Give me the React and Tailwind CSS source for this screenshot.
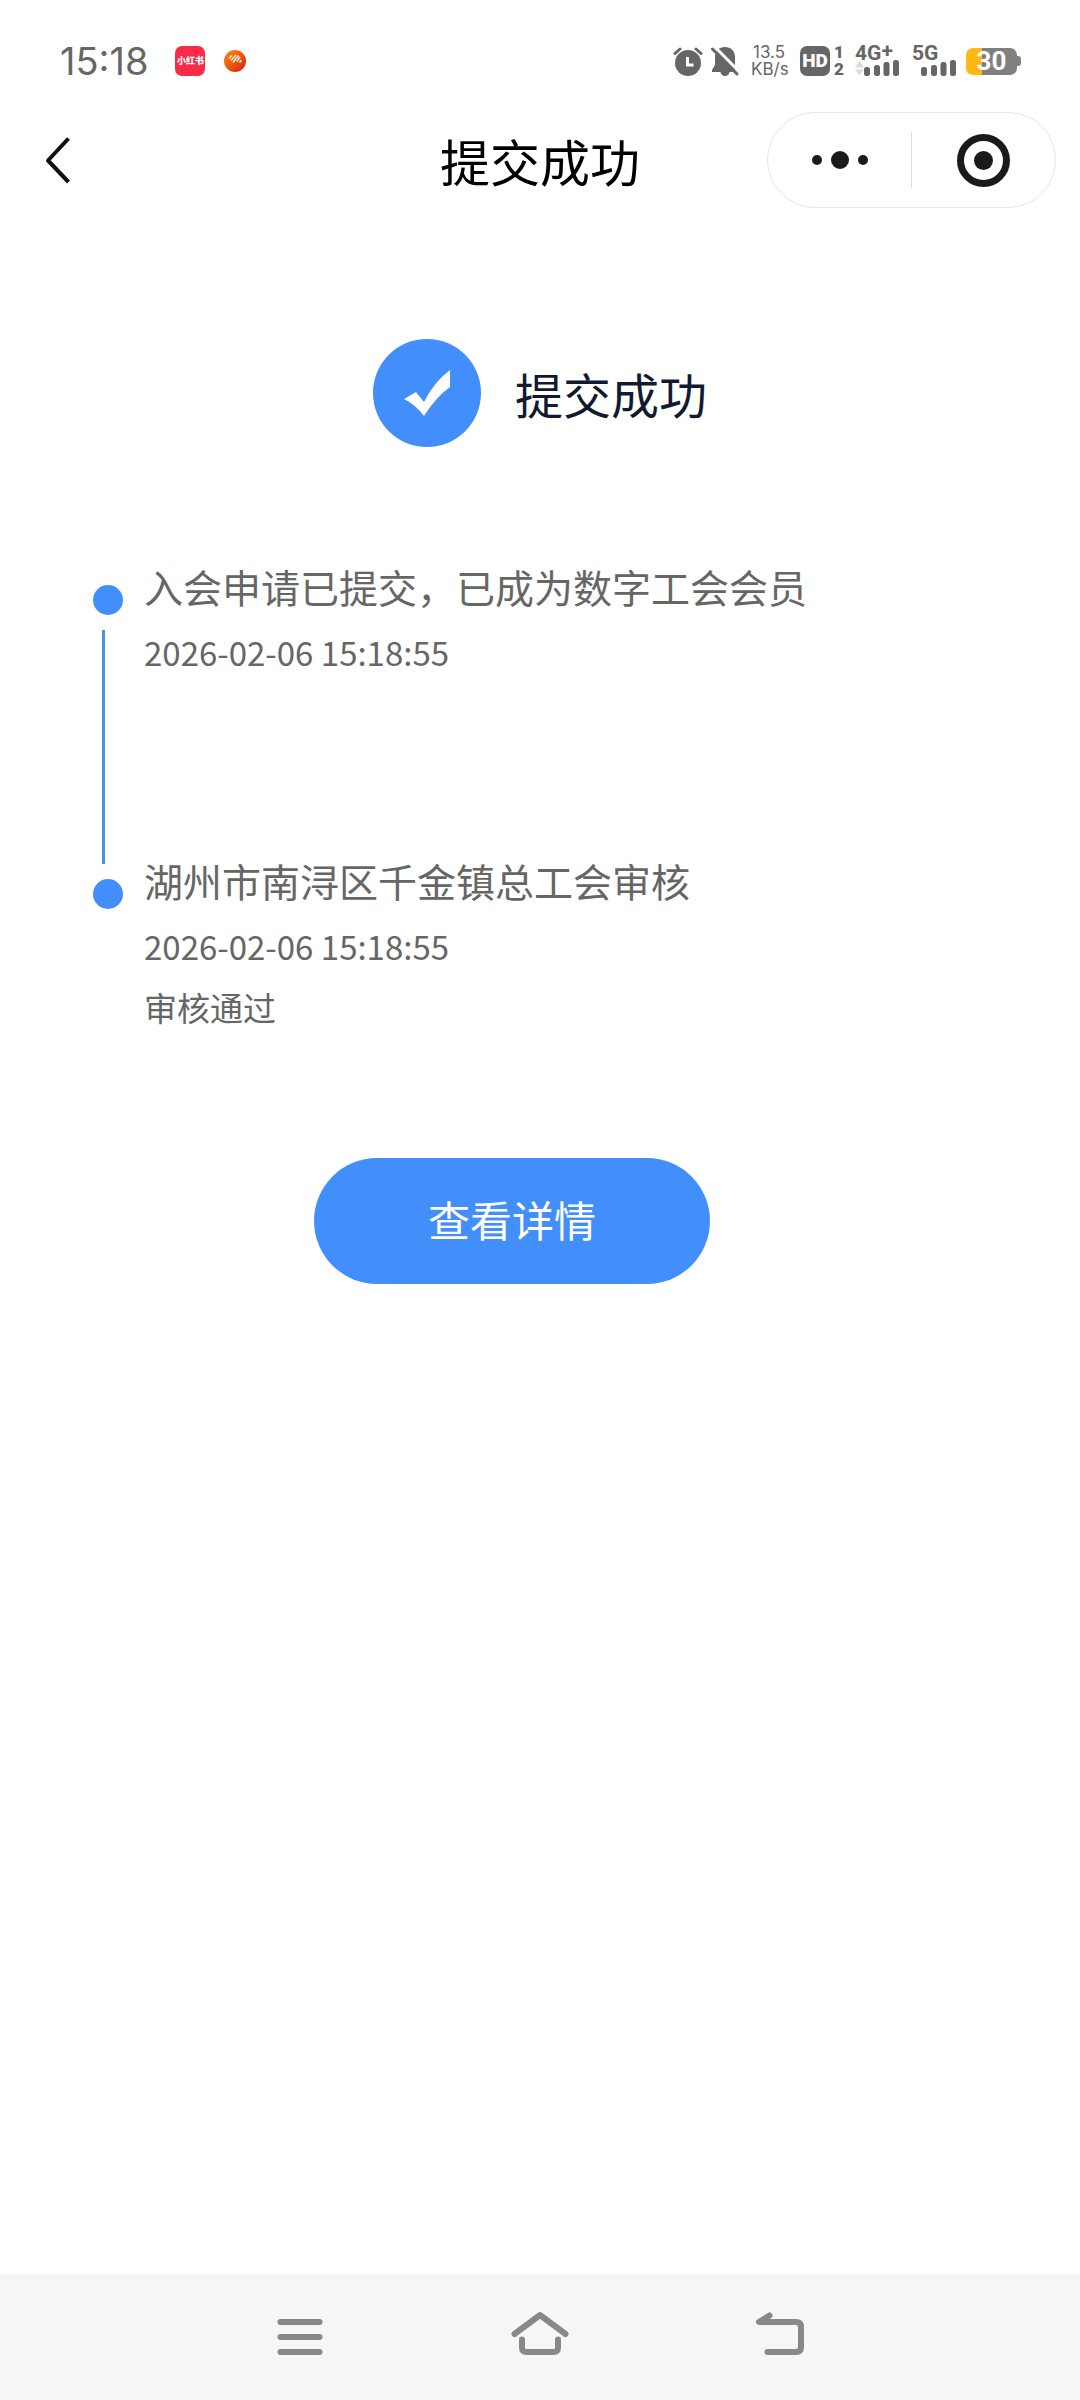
const steps = [
  {
    id: 1,
    title: "入会申请已提交，已成为数字工会会员",
    time: "2026-02-06 15:18:55",
  },
  {
    id: 2,
    title: "湖州市南浔区千金镇总工会审核",
    time: "2026-02-06 15:18:55",
    result: "审核通过",
  },
]

const SignalBars = ({ idle }) => (
  <svg className="shrink-0" width="46" height="16" viewBox="0 0 46 16" fill="#666666">
    {idle && (
      <g fill="#d9d9d9">
        <path d="M0 7.500L4.500 1L9 7.500z" />
        <path d="M0 9.500h9L4.500 15z" />
      </g>
    )}
    <rect x="9" y="7" width="6" height="9" rx="2.500" />
    <rect x="19" y="5" width="6" height="11" rx="2.500" />
    <rect x="28.500" y="2" width="6" height="14" rx="2.500" />
    <rect x="38" y="0" width="6" height="16" rx="2.500" />
  </svg>
)

const StatusBar = () => (
  <div className="flex h-[104px] items-center pt-[18px] pl-[60px] pr-[59px] font-['Inter',sans-serif] text-[#666666]">
    <span className="text-[38px] leading-[40px]">15:18</span>
    <span className="ml-[27px] flex size-[30px] items-center justify-center rounded-[7px] bg-[#fb2a47] font-['Noto_Sans_CJK_SC',sans-serif] text-[9px] leading-[10px] font-black whitespace-nowrap text-white">
      小红书
    </span>
    <svg className="ml-[19px]" width="22" height="22" viewBox="0 0 22 22">
      <defs>
        <linearGradient id="ball" x1="0" y1="0" x2="1" y2="1">
          <stop offset="0" stopColor="#ff8a1c" />
          <stop offset="0.500" stopColor="#f2560f" />
          <stop offset="1" stopColor="#c81e0c" />
        </linearGradient>
      </defs>
      <circle cx="11" cy="11" r="11" fill="url(#ball)" />
      <path d="M5 8.500L8 5.500M7 10.500L12 5M9 12.500L14.500 5.500M13 11.500L16 7M15.500 12.500L17.500 10" stroke="#fff3d8" strokeWidth="1.500" fill="none" />
    </svg>

    <div className="ml-auto flex items-center">
      <svg width="30" height="30" viewBox="0 0 30 30">
        <circle cx="15" cy="17" r="13" fill="#666666" />
        <path d="M2 7.500L7 3M28 7.500L23 3" stroke="#666666" strokeWidth="3" strokeLinecap="round" />
        <path d="M14.500 11v8h6" fill="none" stroke="#fff" strokeWidth="3" />
      </svg>
      <svg className="ml-2" width="28" height="30" viewBox="0 0 28 30">
        <path
          d="M14 1c-6 0-10 4-10 10v8l-3 5v2h8.500a4.500 4 0 0 0 9 0H24V11c0-6-4-10-10-10z"
          fill="#666666"
        />
        <path d="M3 0L29 26.500" stroke="#fff" strokeWidth="3" />
        <path d="M1.500 3L26 28" stroke="#666666" strokeWidth="3" strokeLinecap="round" />
      </svg>
      <div className="ml-3 w-[36px] text-center text-[17px] leading-[17px]">
        <div>13.5</div>
        <div>KB/s</div>
      </div>
      <span className="ml-[13px] flex size-[30px] items-center justify-center rounded-[7px] bg-[#666666] font-['Roboto',sans-serif] text-[19px] font-black text-white">
        HD
      </span>
      <div className="ml-1 w-[10px] text-center font-['Roboto',sans-serif] text-[17px] leading-[17px] font-black">
        <div>1</div>
        <div>2</div>
      </div>
      <div className="ml-[11px] flex h-[30px] flex-col">
        <span className="flex h-[14px] items-center font-['Roboto',sans-serif] text-[21px] leading-[14px] font-bold">
          4G<span className="pb-1">+</span>
        </span>
        <SignalBars idle />
      </div>
      <div className="ml-[11px] flex h-[30px] flex-col">
        <span className="h-[14px] font-['Roboto',sans-serif] text-[21px] leading-[14px] font-bold">5G</span>
        <SignalBars />
      </div>
      <div className="ml-2 flex items-center">
        <span className="flex h-[27px] w-[51px] items-center justify-center rounded-[7px] bg-linear-to-r from-[#fdb813] from-32% to-[#808080] to-32% font-['Roboto',sans-serif] text-[26px] leading-[27px] font-bold text-white">
          30
        </span>
        <span className="h-[10px] w-[4px] rounded-r-[3px] bg-[#808080]" />
      </div>
    </div>
  </div>
)

const Header = () => (
  <header className="grid h-[112px] grid-cols-[1fr_auto_1fr] items-center px-6">
    <button type="button" aria-label="返回" className="justify-self-start pl-5">
      <svg width="28" height="48" viewBox="0 0 28 48" fill="none" stroke="#111" strokeWidth="4" strokeLinejoin="round">
        <path d="M24.500 2.500L4 24.500L24.500 46" />
      </svg>
    </button>
    <h1 className="text-[50px] leading-[60px] text-black">提交成功</h1>
    <div className="flex h-[96px] w-[289px] items-center justify-self-end rounded-full border border-[#e6e6e6]">
      <button type="button" aria-label="更多" className="flex flex-1 items-center justify-center gap-[9px]">
        <span className="size-[10px] rounded-full bg-[#1a1a1a]" />
        <span className="size-[18px] rounded-full bg-[#1a1a1a]" />
        <span className="size-[10px] rounded-full bg-[#1a1a1a]" />
      </button>
      <span className="h-[57px] w-px bg-[#e0e0e0]" />
      <button type="button" aria-label="关闭" className="flex flex-1 justify-center">
        <span className="flex size-[53px] items-center justify-center rounded-full border-[7px] border-[#1a1a1a]">
          <span className="size-[19px] rounded-full bg-[#1a1a1a]" />
        </span>
      </button>
    </div>
  </header>
)

const Timeline = () => (
  <ol className="mt-[123px] pl-[93px] text-[#666666]">
    {steps.map((step, index) => (
      <li key={step.id} className={index < steps.length - 1 ? "flex min-h-[294px] gap-[21px]" : "flex gap-[21px]"}>
        <div className="flex w-[30px] shrink-0 flex-col gap-[15px] pt-[15px]">
          <span className="size-[30px] rounded-full bg-[#428ffc]" />
          {index < steps.length - 1 && <span className="ml-[9px] w-[3px] flex-1 bg-[#4a90e2]" />}
        </div>
        <div>
          <h3 className="text-[39px] leading-[32px]">{step.title}</h3>
          <p className="mt-[30px] text-[33px] leading-[40px]">{step.time}</p>
          {step.result && <p className="mt-[21px] text-[33px] leading-[40px]">{step.result}</p>}
        </div>
      </li>
    ))}
  </ol>
)

const NavBar = () => (
  <nav className="flex h-[126px] items-center justify-center bg-[#f6f6f6]">
    <button type="button" aria-label="菜单" className="flex w-[240px] justify-center">
      <svg width="60" height="60" viewBox="0 0 60 60" fill="none" stroke="#888888" strokeWidth="6" strokeLinecap="round">
        <path d="M10.500 15H49.500M10.500 30H49.500M10.500 45H49.500" />
      </svg>
    </button>
    <button type="button" aria-label="主页" className="flex w-[240px] justify-center">
      <svg width="60" height="60" viewBox="0 0 60 60" fill="none" stroke="#888888" strokeWidth="6" strokeLinecap="round" strokeLinejoin="round">
        <path d="M4.500 27L30 8L55.500 27" />
        <path d="M12 32.500V40.500Q12 45 16.500 45H43.500Q48 45 48 40.500V32.500" />
      </svg>
    </button>
    <button type="button" aria-label="后退" className="flex w-[240px] justify-center">
      <svg width="60" height="60" viewBox="0 0 60 60" fill="none" stroke="#888888" strokeWidth="6" strokeLinecap="round" strokeLinejoin="round">
        <path d="M19.500 8.500L9 15H46Q51 15 51 20V40Q51 45 46 45H17.500" />
      </svg>
    </button>
  </nav>
)

const App = () => {
  return (
    <div className="flex min-h-screen flex-col bg-white font-['Noto_Sans_CJK_SC',sans-serif]">
      <StatusBar />
      <Header />
      <main className="flex-1">
        <div className="mt-[123px] flex items-center justify-center gap-[34px]">
          <svg width="108" height="108" viewBox="0 0 108 108">
            <circle cx="54" cy="54" r="54" fill="#428ffc" />
            <path d="M31 60L43 53L51 63Q61 43 77 31V48Q63 58 51 77Q43 66 31 60z" fill="#fff" />
          </svg>
          <h2 className="text-[48px] leading-[56px] text-[#111a30]">提交成功</h2>
        </div>
        <Timeline />
        <div className="mt-[131px] flex justify-center pr-14">
          <button type="button" className="h-[126px] w-[396px] rounded-full bg-[#428ffc] pb-1 text-[42px] leading-[50px] text-white">
            查看详情
          </button>
        </div>
      </main>
      <NavBar />
    </div>
  )
}

export default App
